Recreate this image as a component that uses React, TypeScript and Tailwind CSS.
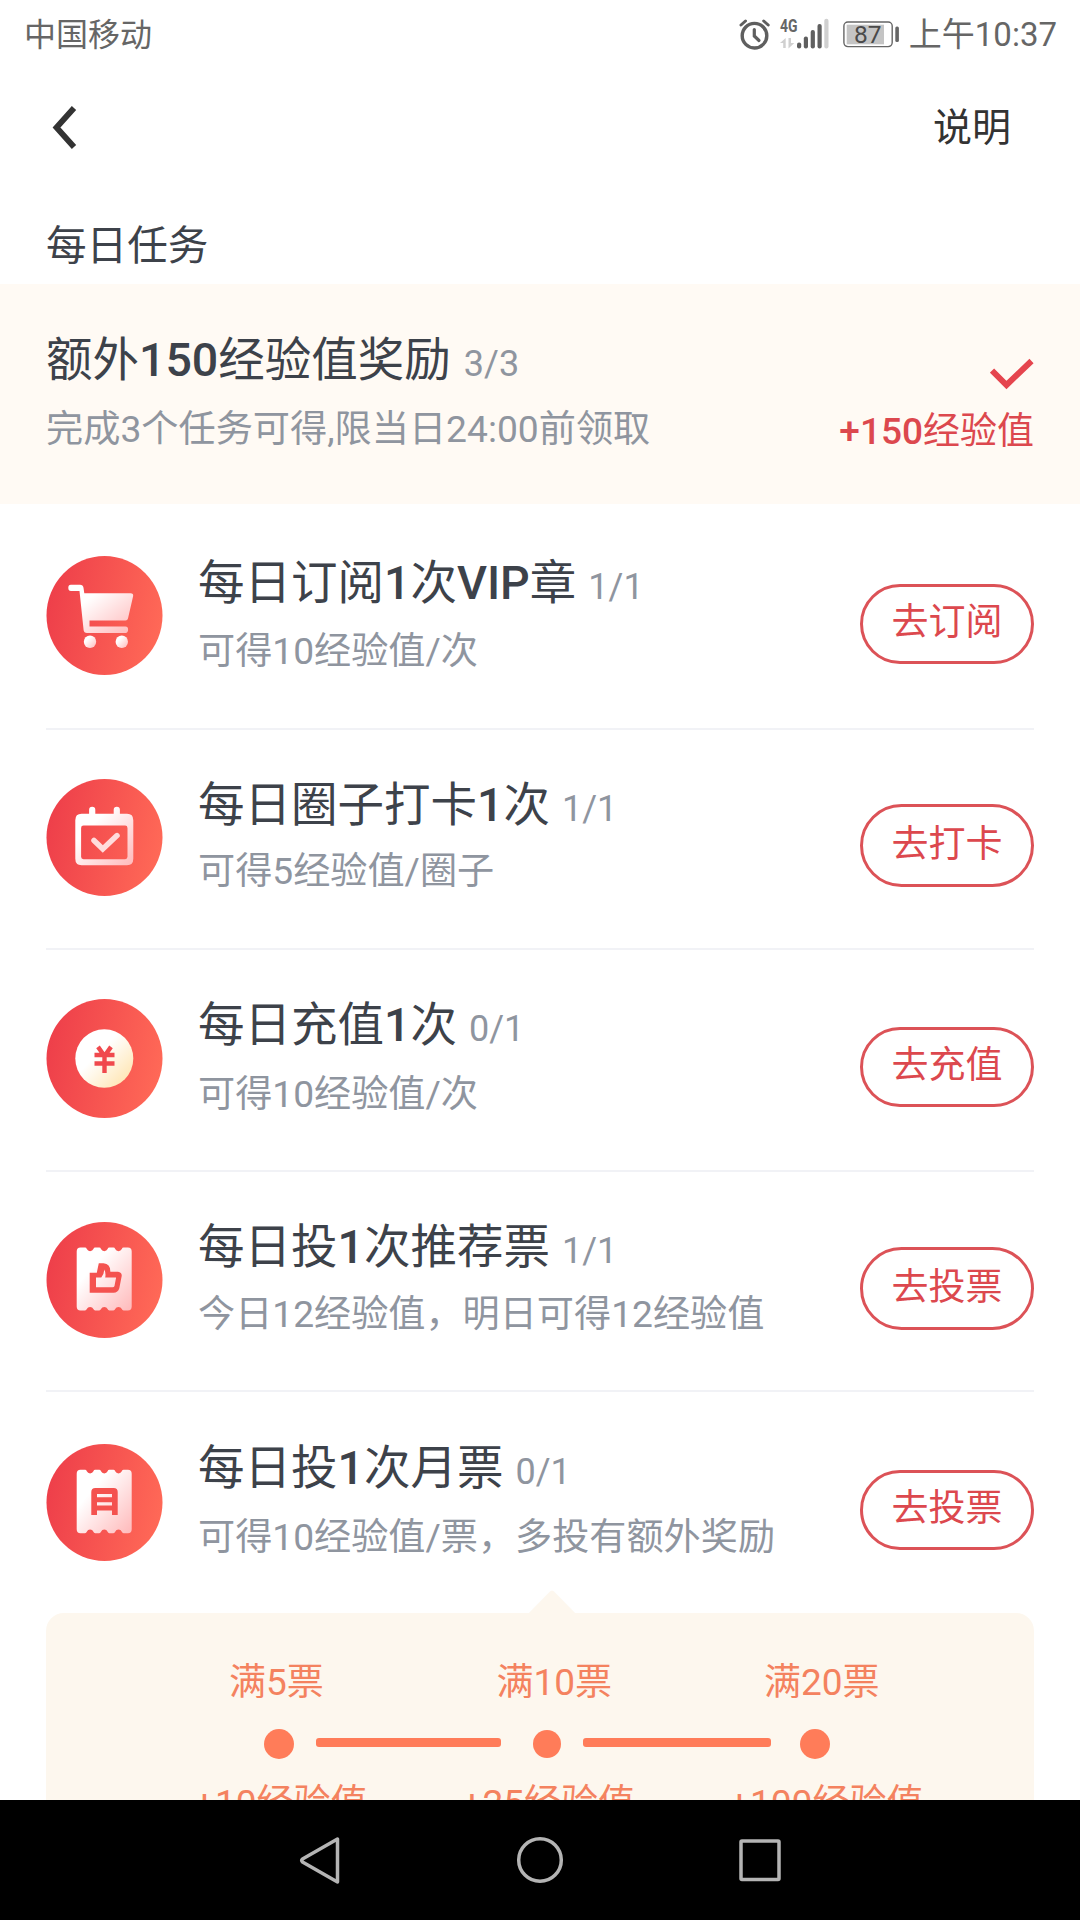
import { Fragment } from "react";
import type { ReactNode } from "react";

type Task = {
    title: string;
    count: string;
    desc: string;
    action: string;
    icon: ReactNode;
    rowClass: string;
    iconClass: string;
    bodyClass: string;
    descClass: string;
    buttonClass: string;
};

const TICKET =
    "M30.2 30Q30.2 26 34 26H38.5Q39.8 26 40.3 27.5a3.6 3.6 0 0 0 6.6 0Q47.4 26 48.7 26H52.7Q54 26 54.5 27.5a3.6 3.6 0 0 0 6.6 0Q61.6 26 62.9 26H66.9Q68.2 26 68.7 27.5a3.6 3.6 0 0 0 6.6 0Q75.8 26 77.1 26H81.4Q85.2 26 85.2 30V86Q85.2 90 81.4 90H77.1Q75.8 90 75.3 88.5a3.6 3.6 0 0 0-6.6 0Q68.2 90 66.9 90H62.9Q61.6 90 61.1 88.5a3.6 3.6 0 0 0-6.6 0Q54 90 52.7 90H48.7Q47.4 90 46.9 88.5a3.6 3.6 0 0 0-6.6 0Q39.8 90 38.5 90H34Q30.2 90 30.2 86Z";

function CartIcon() {
    return (
        <g fill="url(#pale)">
            <path d="M24.5 28.5H33.5Q36.5 28.5 37 31.5L37.8 37H84Q87.2 37 86.6 40L81.5 62Q81 64 79 64H43V70H79Q81.6 70 81.6 73.1T79 76.3H40.5Q37.4 76.3 37.1 73.3L33 34.8H24.5Q21.8 34.8 21.8 31.6T24.5 28.5Z" />
            <circle cx="43.5" cy="85" r="6.2" />
            <circle cx="75.3" cy="85" r="6.2" />
        </g>
    );
}

function CalendarIcon() {
    return (
        <g>
            <path
                fill="url(#pale)"
                fillRule="evenodd"
                d="M42.6 35V31Q42.6 28 45.7 28T48.8 31V35H67.2V31Q67.2 28 70.3 28T73.4 31V35H80.5Q86.8 35 86.8 41.5V80.5Q86.8 87 80.5 87H35.1Q28.8 87 28.8 80.5V41.5Q28.8 35 35.1 35ZM37 47Q34.6 47 34.6 49.5V78.5Q34.6 81 37 81H78.6Q81 81 81 78.5V49.5Q81 47 78.6 47Z"
            />
            <path d="M47.5 62L56.3 70.5L70.5 57" fill="none" stroke="#ffdcdc" strokeWidth="5.5" strokeLinecap="round" />
        </g>
    );
}

function CoinIcon() {
    return (
        <g>
            <circle cx="57.8" cy="59" r="29" fill="url(#gold)" />
            <path d="M51.5 47.5L58 56.5L64.5 47.5M58 56V73.5M48 55.5H68M48 64H68" fill="none" stroke="#f0494d" strokeWidth="4.4" />
        </g>
    );
}

function ThumbTicketIcon() {
    return (
        <g>
            <path d={TICKET} fill="url(#pale)" />
            <path
                fill="#f4524f"
                fillRule="evenodd"
                d="M43.2 51.5H50.3L52.3 42H57Q64 42.6 63.8 50.5H71.5Q75.6 51 75.2 55L72.8 67.5Q71.5 72 67 72H43.2ZM49.5 56.5V66.5H66Q67.6 66.5 68 65L69.6 56.5H58.7Q59.6 52 57.8 48.3Q57.5 53.5 54.8 56.5Z"
            />
        </g>
    );
}

function MonthTicketIcon() {
    return (
        <g>
            <path d={TICKET} fill="url(#pale)" />
            <path
                fill="#f4524f"
                fillRule="evenodd"
                d="M44.8 71.5V48.5Q44.8 44.5 48.8 44.5H67.2Q71.2 44.5 71.2 48.5V71.5H65.5V67H50.5V71.5ZM50.5 50.5V53.8H65.5V50.5ZM50.5 58.8V62H65.5V58.8Z"
            />
        </g>
    );
}

const tasks: Task[] = [
    {
        title: "每日订阅1次VIP章",
        count: "1/1",
        desc: "可得10经验值/次",
        action: "去订阅",
        icon: <CartIcon />,
        rowClass: "h-[226px] pt-[52px] border-b-2",
        iconClass: "h-[119px]",
        bodyClass: "pt-[3px]",
        descClass: "mt-[25px]",
        buttonClass: "mt-[28px] h-[80px]",
    },
    {
        title: "每日圈子打卡1次",
        count: "1/1",
        desc: "可得5经验值/圈子",
        action: "去打卡",
        icon: <CalendarIcon />,
        rowClass: "h-[220px] pt-[49px] border-b-2",
        iconClass: "h-[117px]",
        bodyClass: "pt-[2px]",
        descClass: "mt-[23px]",
        buttonClass: "mt-[25px] h-[83px]",
    },
    {
        title: "每日充值1次",
        count: "0/1",
        desc: "可得10经验值/次",
        action: "去充值",
        icon: <CoinIcon />,
        rowClass: "h-[222px] pt-[49px] border-b-2",
        iconClass: "h-[119px]",
        bodyClass: "pt-[2px]",
        descClass: "mt-[26px]",
        buttonClass: "mt-[28px] h-[80px]",
    },
    {
        title: "每日投1次推荐票",
        count: "1/1",
        desc: "今日12经验值，明日可得12经验值",
        action: "去投票",
        icon: <ThumbTicketIcon />,
        rowClass: "h-[220px] pt-[50px] border-b-2",
        iconClass: "h-[116px]",
        bodyClass: "pt-[1px]",
        descClass: "mt-[24px]",
        buttonClass: "mt-[25px] h-[83px]",
    },
    {
        title: "每日投1次月票",
        count: "0/1",
        desc: "可得10经验值/票，多投有额外奖励",
        action: "去投票",
        icon: <MonthTicketIcon />,
        rowClass: "h-[221px] pt-[52px]",
        iconClass: "h-[117px]",
        bodyClass: "",
        descClass: "mt-[26px]",
        buttonClass: "mt-[26px] h-[80px]",
    },
];

const steps = [
    { label: "满5票", reward: "+10经验值" },
    { label: "满10票", reward: "+25经验值" },
    { label: "满20票", reward: "+100经验值" },
];

// latin letters and digits are set heavier than the chinese text around them
function Mixed({ text }: { text: string }) {
    return (
        <>
            {text.split(/([+A-Za-z0-9]+)/).map((part, i) =>
                i % 2 ? (
                    <span key={i} className="font-medium">
                        {part}
                    </span>
                ) : (
                    <Fragment key={i}>{part}</Fragment>
                )
            )}
        </>
    );
}

function StatusBar() {
    return (
        <div className="flex h-[69px] items-center pl-[24px] pr-[23px] text-[#666666]">
            <span className="flex-1 text-[32px]">中国移动</span>
            <svg width="32" height="34" viewBox="738 17 32 34" fill="none" stroke="#5f5f5f" strokeLinecap="round">
                <circle cx="753.5" cy="34.7" r="12.3" strokeWidth="3.4" />
                <path d="M753.3 28.5V35L758 39.5" strokeWidth="3.2" />
                <path d="M740 24L744.5 20M762.7 20L767.2 24" strokeWidth="3" />
            </svg>
            <svg className="ml-[8px]" width="50" height="46" viewBox="778 11 50 46">
                <text x="779" y="31" fontSize="18" fontWeight="700" fill="#666666" textLength="17.5" lengthAdjust="spacingAndGlyphs">
                    4G
                </text>
                <path d="M779 42L784.7 37V47H782.2V42ZM787.5 37H790V42H793.3L787.5 47.5Z" fill="#d0d0d0" />
                <g fill="#5f5f5f">
                    <rect x="796" y="41.5" width="4.2" height="6" rx="2" />
                    <rect x="802.8" y="35.5" width="4.2" height="12" rx="2" />
                    <rect x="809.7" y="29" width="4.2" height="18.5" rx="2" />
                    <rect x="816.5" y="23" width="4.2" height="24.5" rx="2" />
                </g>
                <rect x="823.3" y="17.7" width="4.2" height="29.8" rx="2" fill="#d0d0d0" />
            </svg>
            <svg className="ml-[13px]" width="58" height="34" viewBox="841 17 58 34">
                <rect x="842.9" y="21" width="48.3" height="24.6" rx="4" fill="#ffffff" stroke="#666666" strokeWidth="1.4" />
                <rect x="845.7" y="23.7" width="37.3" height="19.6" fill="#c4c4c4" />
                <rect x="894.3" y="25.5" width="3.6" height="15.5" rx="1.6" fill="#666666" />
                <text x="853" y="42" fontSize="24.5" fill="#4a4a4a">
                    87
                </text>
            </svg>
            <span className="ml-[9px] whitespace-nowrap text-[33px]">上午10:37</span>
        </div>
    );
}

function TaskRow({ task }: { task: Task }) {
    return (
        <div className={`mx-[46px] flex items-start border-[#f1f2f6] ${task.rowClass}`}>
            <svg className={`w-[117px] shrink-0 ${task.iconClass}`} viewBox="-0.5 0 117 118" preserveAspectRatio="none">
                <ellipse cx="58" cy="59" rx="58" ry="59" fill="url(#disc)" />
                {task.icon}
            </svg>
            <div className={`ml-[35px] flex-1 ${task.bodyClass}`}>
                <div className="flex h-[48px] items-baseline text-[46.5px] leading-[48px] whitespace-nowrap text-[#3d424a]">
                    <span>
                        <Mixed text={task.title} />
                    </span>
                    <span className="ml-[12px] text-[36px] text-[#8f959f]">{task.count}</span>
                </div>
                <p className={`text-[37.15px] leading-[40px] whitespace-nowrap text-[#8f959f] ${task.descClass}`}>{task.desc}</p>
            </div>
            <button
                className={`w-[174px] shrink-0 rounded-full border-[3px] border-[#dc5257] pb-[2px] text-[37px] leading-[40px] text-[#dc484e] ${task.buttonClass}`}
            >
                {task.action}
            </button>
        </div>
    );
}

function VoteSteps() {
    return (
        <div className="relative mx-[46px] h-[187px] rounded-t-[18px] bg-[#fdf7ee] pt-[50px] text-[37px] leading-[40px] whitespace-nowrap text-[#f4825f]">
            <svg className="absolute -top-[23px] left-[482px]" width="48" height="24" viewBox="0 0 48 24">
                <path d="M0 24L21.5 2Q24 -1 26.5 2L48 24Z" fill="#fdf7ee" />
            </svg>
            <div className="flex pl-[183px]">
                {steps.map((step) => (
                    <span key={step.label} className="w-[267.5px] shrink-0">
                        {step.label}
                    </span>
                ))}
            </div>
            <div className="mt-[26px] flex items-center pl-[218px]">
                <span className="size-[30px] rounded-full bg-[#ff7c59]" />
                <span className="mb-[3px] ml-[22px] h-[9px] w-[185px] rounded-[3px] bg-[#ff7c59]" />
                <span className="ml-[32px] size-[28px] rounded-full bg-[#ff7c59]" />
                <span className="mb-[3px] ml-[22px] h-[9px] w-[188px] rounded-[3px] bg-[#ff7c59]" />
                <span className="ml-[29px] size-[30px] rounded-full bg-[#ff7c59]" />
            </div>
            <div className="mt-[25px] flex pl-[148px]">
                {steps.map((step) => (
                    <span key={step.reward} className="w-[267.5px] shrink-0">
                        {step.reward}
                    </span>
                ))}
            </div>
        </div>
    );
}

function NavBar() {
    return (
        <div className="h-[120px] bg-black">
            <svg width="1080" height="120" viewBox="0 0 1080 120" fill="none" stroke="#b4b4b4" strokeWidth="3.5" strokeLinejoin="round">
                <path d="M337.5 39V82L302.5 62Q301 60.5 302.5 59Z" />
                <circle cx="540" cy="60" r="21.3" />
                <rect x="741" y="41" width="38" height="38.5" rx="1" />
            </svg>
        </div>
    );
}

export default function App() {
    return (
        <div className="h-[1920px] w-[1080px] overflow-hidden bg-white font-['Roboto','Noto_Sans_CJK_SC',sans-serif]">
            <svg className="absolute" width="0" height="0">
                <defs>
                    <linearGradient id="disc" x1="0" y1="0.4" x2="1" y2="0.6">
                        <stop offset="0" stopColor="#ee3f4a" />
                        <stop offset="1" stopColor="#ff6957" />
                    </linearGradient>
                    <linearGradient id="pale" x1="0" y1="0" x2="1" y2="1">
                        <stop offset="0.3" stopColor="#ffffff" />
                        <stop offset="1" stopColor="#ffb9ba" />
                    </linearGradient>
                    <linearGradient id="gold" x1="0" y1="0" x2="1" y2="1">
                        <stop offset="0.4" stopColor="#ffffff" />
                        <stop offset="1" stopColor="#ffe0a3" />
                    </linearGradient>
                </defs>
            </svg>
            <div className="flex h-[1800px] flex-col overflow-hidden">
                <StatusBar />
                <header className="flex h-[118px] items-center justify-between pl-[52px] pr-[69px] text-[39px] text-[#333333]">
                    <svg width="28" height="46" viewBox="0 0 28 46" fill="none" stroke="#333333" strokeWidth="5.8">
                        <path d="M22 3L4.5 22.5L22 42" />
                    </svg>
                    <span>说明</span>
                </header>
                <h2 className="h-[97px] pl-[46px] pt-[29px] text-[40.6px] leading-[60px] text-[#3d424a]">每日任务</h2>
                <section className="flex h-[220px] shrink-0 justify-between bg-[#fffaf4] px-[46px] pt-[52px] whitespace-nowrap">
                    <div>
                        <div className="flex h-[48px] items-baseline text-[46.5px] leading-[48px] text-[#3d424a]">
                            <span>
                                <Mixed text="额外150经验值奖励" />
                            </span>
                            <span className="ml-[13px] text-[36px] text-[#8f959f]">3/3</span>
                        </div>
                        <p className="mt-[25px] text-[37.2px] leading-[40px] text-[#8f959f]">完成3个任务可得,限当日24:00前领取</p>
                    </div>
                    <div className="flex flex-col items-end pt-[22px]">
                        <svg width="44" height="32" viewBox="0 0 44 32" fill="none" stroke="#e5454e" strokeWidth="6">
                            <path d="M2 12.5L16.5 27L41.5 3" />
                        </svg>
                        <p className="mt-[22px] text-[37px] leading-[40px] text-[#dc484e]">
                            <Mixed text="+150经验值" />
                        </p>
                    </div>
                </section>
                {tasks.map((task) => (
                    <TaskRow key={task.title} task={task} />
                ))}
                <VoteSteps />
            </div>
            <NavBar />
        </div>
    );
}
